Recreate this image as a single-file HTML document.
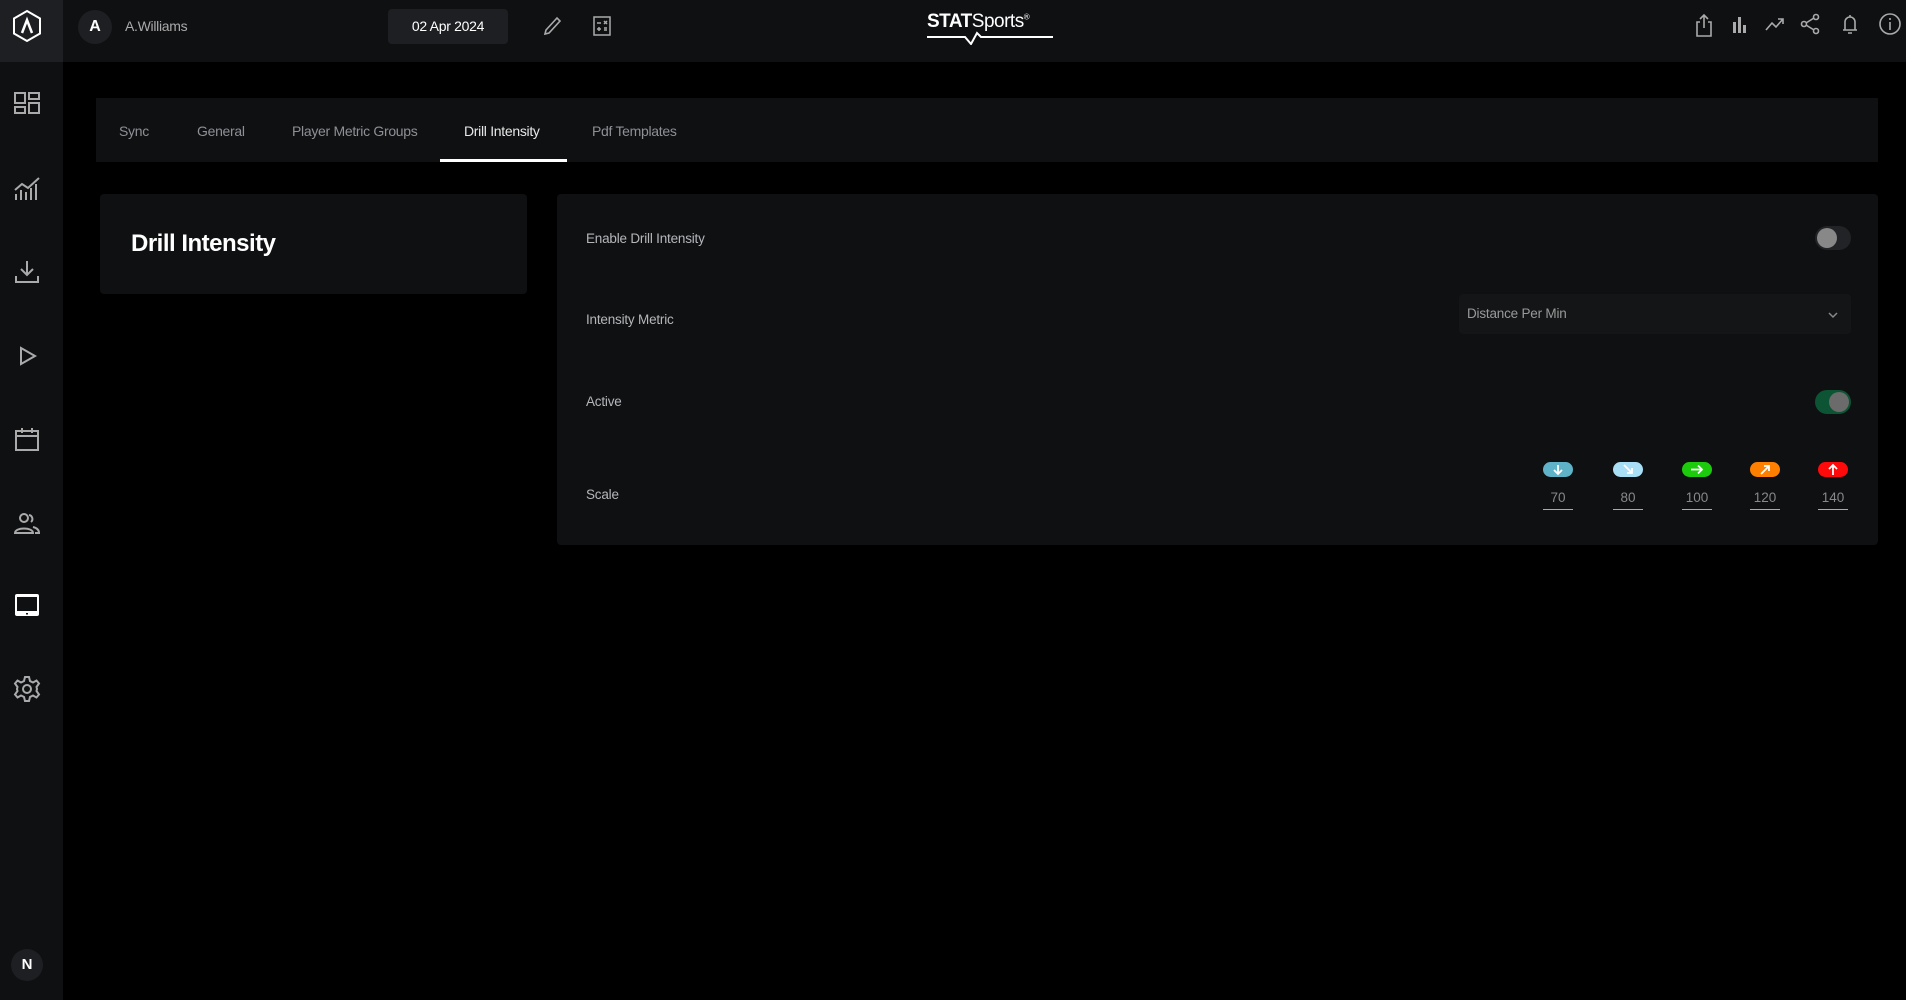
<!DOCTYPE html>
<html><head><meta charset="utf-8">
<style>
*{box-sizing:border-box;margin:0;padding:0}
body{width:1906px;height:1000px;background:#000;font-family:"Liberation Sans Narrow","Liberation Sans",sans-serif;color:#bbb;position:relative;overflow:hidden}
.abs{position:absolute}
#top{left:0;top:0;width:1906px;height:62px;background:#0f1012}
#side{left:0;top:0;width:63px;height:1000px;background:#0f1012}
#logo{left:0;top:0;width:63px;height:62px;background:#1e1f22}
.ic{position:absolute;left:11px;width:32px;height:32px}
svg{display:block}
.tab{position:absolute;top:123px;font-size:14px;color:#8e9096;letter-spacing:-0.3px}
.lbl{position:absolute;left:586px;font-size:13.5px;color:#b4b6ba;letter-spacing:-0.2px}
.pill{position:absolute;top:462px;width:30px;height:15px;border-radius:8px}
.num{position:absolute;top:490px;width:30px;text-align:center;font-size:13.5px;color:#888;border-bottom:1px solid #aaa;padding-bottom:4px}
</style></head><body>
<div id="top" class="abs"></div>
<div id="side" class="abs"></div>
<div id="logo" class="abs">
<svg width="63" height="62"><polygon points="27,11 40,18.5 40,33.5 27,41 14,33.5 14,18.5" fill="none" stroke="#fff" stroke-width="2"/><path d="M22,33 L27,20 L32,33" fill="none" stroke="#fff" stroke-width="2.5"/></svg>
</div>
<svg class="ic" style="top:88px" viewBox="0 0 32 32" fill="none" stroke="#aaa" stroke-width="2"><rect x="4" y="5" width="10" height="10"/><rect x="18" y="5" width="10" height="6"/><rect x="4" y="19" width="10" height="6"/><rect x="18" y="15" width="10" height="10"/></svg>
<svg class="ic" style="top:172px" viewBox="0 0 32 32" fill="none" stroke="#aaa" stroke-width="2"><path d="M4,18 L11,12 L17,16 L28,6"/><path d="M5,28V22M10,28V18M15,28V20M20,28V16M25,28V12"/></svg>
<svg class="ic" style="top:256px" viewBox="0 0 32 32" fill="none" stroke="#aaa" stroke-width="2"><path d="M16,5V19M10,13L16,19L22,13M5,20V26H27V20"/></svg>
<svg class="ic" style="top:340px" viewBox="0 0 32 32" fill="none" stroke="#aaa" stroke-width="2"><path d="M10,8L24,16L10,24Z"/></svg>
<svg class="ic" style="top:423px" viewBox="0 0 32 32" fill="none" stroke="#aaa" stroke-width="2"><rect x="5" y="8" width="22" height="19"/><path d="M5,13H27M11,5V10M21,5V10"/></svg>
<svg class="ic" style="top:507px" viewBox="0 0 32 32" fill="none" stroke="#aaa" stroke-width="2"><circle cx="13" cy="11" r="4"/><path d="M4,26C4,20 22,20 22,26Z"/><path d="M18,8A4,4 0 0 1 20,15M22,20C26,21 28,23 28,26H24"/></svg>
<svg class="ic" style="top:589px" viewBox="0 0 32 32"><rect x="4" y="5" width="24" height="22" rx="2" fill="#fff"/><rect x="6" y="8" width="20" height="14" fill="#0f1012"/><rect x="15" y="24" width="2" height="1.5" fill="#0f1012"/></svg>
<svg class="ic" style="top:673px" viewBox="0 0 32 32" fill="none" stroke="#aaa" stroke-width="2"><circle cx="16" cy="16" r="4"/><path d="M14,4H18L19,8L22,9.5L25.5,7.5L28,10.5L25.5,14L26,16L25.5,18L28,21.5L25.5,24.5L22,22.5L19,24L18,28H14L13,24L10,22.5L6.5,24.5L4,21.5L6.5,18L6,16L6.5,14L4,10.5L6.5,7.5L10,9.5L13,8Z"/></svg>
<div class="abs" style="left:11px;top:949px;width:32px;height:32px;border-radius:50%;background:#1e1f22;color:#fff;font-weight:bold;font-size:15px;text-align:center;line-height:32px">N</div>
<div class="abs" style="left:78px;top:10px;width:34px;height:34px;border-radius:50%;background:#1e1f22;color:#fff;font-weight:bold;font-size:16px;text-align:center;line-height:34px">A</div>
<div class="abs" style="left:125px;top:18px;font-size:14px;color:#aaa;letter-spacing:-0.3px">A.Williams</div>
<div class="abs" style="left:388px;top:9px;width:120px;height:35px;border-radius:4px;background:#1e1f22;color:#fff;font-size:14px;text-align:center;line-height:35px;letter-spacing:-0.3px">02 Apr 2024</div>
<svg class="abs" style="left:541px;top:15px" width="22" height="22" viewBox="0 0 22 22" fill="none" stroke="#aaa" stroke-width="1.6"><path d="M4,19L5,15L16,3L19,6L8,18Z"/></svg>
<svg class="abs" style="left:592px;top:15px" width="20" height="22" viewBox="0 0 20 22" fill="none" stroke="#aaa" stroke-width="1.5"><rect x="2" y="2" width="16" height="18"/><path d="M5,8H9M12,6L15,9M15,6L12,9M5,14H9M7,12V16M12,13H15M12,15H15"/></svg>
<div class="abs" style="left:925px;top:11px;width:142px;height:32px">
<div style="position:absolute;left:2px;top:0;font-size:19px;color:#fff;font-family:'Liberation Sans',sans-serif;letter-spacing:-0.5px"><b>STAT</b>Sports<sup style="font-size:8px">®</sup></div>
<svg style="position:absolute;left:0;top:20px" width="142" height="14"><path d="M2,6H40L46,13L52,2L56,6H128" fill="none" stroke="#fff" stroke-width="2"/></svg>
</div>
<svg class="abs" style="left:1694px;top:12px" width="20" height="26" viewBox="0 0 20 26" fill="none" stroke="#aaa" stroke-width="1.6"><path d="M6,10H3V24H17V10H14M10,16V3M6,7L10,3L14,7"/></svg>
<svg class="abs" style="left:1730px;top:14px" width="20" height="20" viewBox="0 0 20 20" fill="#aaa"><rect x="3" y="8" width="3" height="11"/><rect x="8" y="3" width="3" height="16"/><rect x="13" y="11" width="3" height="8"/></svg>
<svg class="abs" style="left:1764px;top:14px" width="22" height="20" viewBox="0 0 22 20" fill="none" stroke="#aaa" stroke-width="1.6"><path d="M2,16L8,9L12,13L19,5M14,5H19V10"/></svg>
<svg class="abs" style="left:1799px;top:12px" width="22" height="24" viewBox="0 0 22 24" fill="none" stroke="#aaa" stroke-width="1.6"><circle cx="17" cy="5" r="2.5"/><circle cx="5" cy="12" r="2.5"/><circle cx="17" cy="19" r="2.5"/><path d="M7,11L15,6M7,13L15,18"/></svg>
<svg class="abs" style="left:1840px;top:12px" width="20" height="24" viewBox="0 0 20 24" fill="none" stroke="#aaa" stroke-width="1.6"><path d="M5,18V10A5,5 0 0 1 15,10V18H3H17M8,21H12M10,3V5"/></svg>
<svg class="abs" style="left:1878px;top:12px" width="24" height="24" viewBox="0 0 24 24" fill="none" stroke="#aaa" stroke-width="1.6"><circle cx="12" cy="12" r="10"/><path d="M12,10V18M12,6V8"/></svg>
<div class="abs" style="left:96px;top:98px;width:1782px;height:64px;background:#0f1012"></div>
<div class="tab" style="left:119px">Sync</div>
<div class="tab" style="left:197px">General</div>
<div class="tab" style="left:292px">Player Metric Groups</div>
<div class="tab" style="left:464px;color:#e8e8e8">Drill Intensity</div>
<div class="tab" style="left:592px">Pdf Templates</div>
<div class="abs" style="left:440px;top:159px;width:127px;height:3px;background:#fff"></div>
<div class="abs" style="left:100px;top:194px;width:427px;height:100px;background:#0f1012;border-radius:4px"></div>
<div class="abs" style="left:131px;top:230px;font-size:24px;font-weight:bold;color:#fff;letter-spacing:-0.5px">Drill Intensity</div>
<div class="abs" style="left:557px;top:194px;width:1321px;height:351px;background:#0f1012;border-radius:4px"></div>
<div class="lbl" style="top:231px">Enable Drill Intensity</div>
<div class="lbl" style="top:312px">Intensity Metric</div>
<div class="lbl" style="top:394px">Active</div>
<div class="lbl" style="top:487px">Scale</div>
<div class="abs" style="left:1815px;top:226px;width:36px;height:24px;border-radius:12px;background:#222326"></div>
<div class="abs" style="left:1817px;top:228px;width:20px;height:20px;border-radius:50%;background:#888"></div>
<div class="abs" style="left:1459px;top:294px;width:392px;height:40px;border-radius:4px;background:#141517"></div>
<div class="abs" style="left:1467px;top:306px;font-size:13.5px;color:#999;letter-spacing:-0.2px">Distance Per Min</div>
<svg class="abs" style="left:1827px;top:310px" width="12" height="10"><path d="M2,3L6,7L10,3" fill="none" stroke="#888" stroke-width="1.5"/></svg>
<div class="abs" style="left:1815px;top:390px;width:36px;height:24px;border-radius:12px;background:#0d5434"></div>
<div class="abs" style="left:1829px;top:392px;width:20px;height:20px;border-radius:50%;background:#6b6b6b"></div>
<div class="pill" style="left:1543px;background:#5fb3c8"></div>
<div class="pill" style="left:1613px;background:#a9dff4"></div>
<div class="pill" style="left:1682px;background:#1ccc0c"></div>
<div class="pill" style="left:1750px;background:#ff7f00"></div>
<div class="pill" style="left:1818px;background:#ff0a0a"></div>
<svg class="abs" style="left:1543px;top:462px" width="30" height="15" fill="none" stroke="#fff" stroke-width="1.8"><path d="M15,3V12M11,8L15,12L19,8"/></svg>
<svg class="abs" style="left:1613px;top:462px" width="30" height="15" fill="none" stroke="#fff" stroke-width="1.8"><path d="M11,3L19,11M19,6V11H14"/></svg>
<svg class="abs" style="left:1682px;top:462px" width="30" height="15" fill="none" stroke="#fff" stroke-width="1.8"><path d="M9,7.5H20M16,3.5L20,7.5L16,11.5"/></svg>
<svg class="abs" style="left:1750px;top:462px" width="30" height="15" fill="none" stroke="#fff" stroke-width="1.8"><path d="M11,12L19,4M14,4H19V9"/></svg>
<svg class="abs" style="left:1818px;top:462px" width="30" height="15" fill="none" stroke="#fff" stroke-width="1.8"><path d="M15,13V3M11,7L15,3L19,7"/></svg>
<div class="num" style="left:1543px">70</div>
<div class="num" style="left:1613px">80</div>
<div class="num" style="left:1682px">100</div>
<div class="num" style="left:1750px">120</div>
<div class="num" style="left:1818px">140</div>
</body></html>
